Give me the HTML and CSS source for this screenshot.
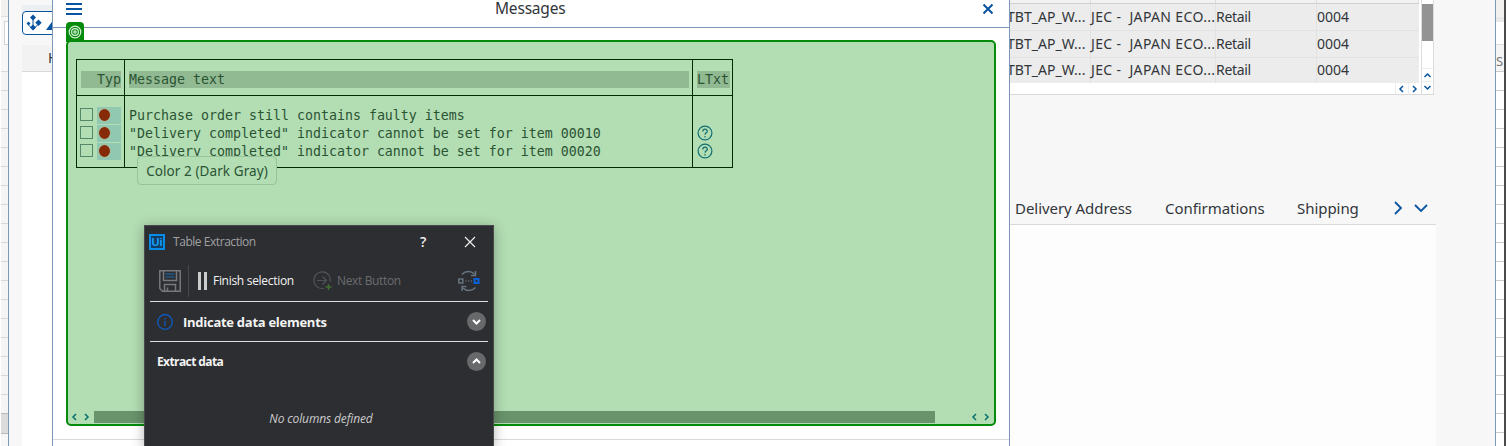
FILE: index.html
```
<!DOCTYPE html>
<html lang="en">
<head>
<meta charset="utf-8">
<title>Messages</title>
<link rel="stylesheet" href="styles.css">
</head>
<body>
<div class="desktop">
  <div class="edge-left"><div class="edge-top"></div><div class="edge-field"><i></i></div><div class="edge-rows"></div><div class="edge-current"></div></div>
  <main class="app">
    <div class="app-left">
      <div class="strip"></div>
      <div class="tool-button">
        <svg width="32" height="22" viewBox="0 0 32 22"><g fill="#0854a0"><path d="M10 2.500l3 3-3 3-3-3zM15.500 7.500l3.200 3.200-3.200 3.200-3.200-3.200zM10 12.500l3 3-3 3-3-3zM5.500 9.500l2 2-2 2-2-2z"/><path d="M31 7v11H23z"/></g><path d="M10 6v10M5.500 13l4.500 4.500 4.500-4.500" fill="none" stroke="#0854a0"/></svg>
      </div>
      <div class="left-head"><span>H</span></div>
      <div class="left-body"></div>
    </div>
    <div class="app-right">
      <div class="items">
        <div class="items-grid">
          <div class="items-head"><i></i><i></i><i></i><i></i></div>
          <div class="items-row"><span class="vendor">TBT_AP_W...</span><span class="plant">JEC - &nbsp;JAPAN ECO...</span><span class="retail">Retail</span><span class="code">0004</span></div>
          <div class="items-row"><span class="vendor">TBT_AP_W...</span><span class="plant">JEC - &nbsp;JAPAN ECO...</span><span class="retail">Retail</span><span class="code">0004</span></div>
          <div class="items-row last"><span class="vendor">TBT_AP_W...</span><span class="plant">JEC - &nbsp;JAPAN ECO...</span><span class="retail">Retail</span><span class="code">0004</span></div>
          <div class="items-foot">
            <svg width="26" height="11" viewBox="0 0 26 11"><path d="M.5 0v11M13.500 0v11" stroke="#eee"/><path d="M8 3L5 6l3 3M18 3l3 3-3 3" fill="none" stroke="#0854a0" stroke-width="1.500"/></svg>
          </div>
        </div>
        <div class="vscroll"><div class="thumb"></div>
          <svg width="11" height="26" viewBox="0 0 11 26"><path d="M0 .5h11M0 13.500h11" stroke="#eee"/><path d="M2.500 9l3-3 3 3M2.500 18l3 3 3-3" fill="none" stroke="#0854a0" stroke-width="1.500"/></svg>
        </div>
      </div>
      <nav class="tabs">
        <span class="tab t1">Delivery Address</span><span class="tab t2">Confirmations</span><span class="tab t3">Shipping</span>
        <svg width="36" height="16" viewBox="0 0 36 16"><path d="M2 2l6 6-6 6M22 5l6 6 6-6" fill="none" stroke="#0854a0" stroke-width="1.800"/></svg>
      </nav>
      <div class="tab-body"></div>
    </div>
  </main>
  <div class="edge-right"><div class="er-top"></div><div class="er-gap"></div><div class="er-head">S</div><div class="er-rows"></div></div>

  <section class="dialog">
    <header class="dialog-head">
      <svg width="16" height="16" viewBox="0 0 16 16"><path d="M0 4h16M0 9h16M0 14h16" stroke="#0854a0" stroke-width="2"/></svg>
      <h1>Messages</h1>
      <svg class="close" width="12" height="12" viewBox="0 0 12 12"><path d="M1.500 1.500l9 9M10.500 1.500l-9 9" stroke="#0854a0" stroke-width="2"/></svg>
    </header>
    <div class="target">
      <div class="target-badge"><svg width="14" height="14" viewBox="0 0 14 14" fill="none" stroke="#d8f0d8" stroke-width="1.200"><circle cx="7" cy="7" r="5.800"/><circle cx="7" cy="7" r="3.400"/><circle cx="7" cy="7" r="1.200"/></svg></div>
      <div class="messages">
        <div class="mh c1"><span class="hl right">Typ</span></div>
        <div class="mh c2"><span class="hl">Message text</span></div>
        <div class="mh c3"><span class="hl">LTxt</span></div>
        <div class="mb c1">
          <div class="kind"><i class="check"></i><b><u></u></b></div>
          <div class="kind"><i class="check"></i><b><u></u></b></div>
          <div class="kind"><i class="check"></i><b><u></u></b></div>
        </div>
        <div class="mb c2">
          <p>Purchase order still contains faulty items</p>
          <p>"Delivery completed" indicator cannot be set for item 00010</p>
          <p>"Delivery completed" indicator cannot be set for item 00020</p>
        </div>
        <div class="mb c3 help">
          <svg width="16" height="18" viewBox="0 0 16 18" fill="none" stroke="#116f72" stroke-width="1.200"><circle cx="8" cy="9" r="6.900"/><path d="M5.800 7.500c0-3 4.500-3 4.500-.3C10.300 9 8 8.700 8 10.700M8 12v1.500"/></svg>
          <svg width="16" height="18" viewBox="0 0 16 18" fill="none" stroke="#116f72" stroke-width="1.200"><circle cx="8" cy="9" r="6.900"/><path d="M5.800 7.500c0-3 4.500-3 4.500-.3C10.300 9 8 8.700 8 10.700M8 12v1.500"/></svg>
        </div>
      </div>
      <div class="hscroll">
        <svg width="26" height="12" viewBox="0 0 26 12"><path d="M8 3L5 6l3 3M17 3l3 3-3 3" fill="none" stroke="#08706f" stroke-width="1.500"/></svg>
        <div class="track"></div>
        <svg width="26" height="12" viewBox="0 0 26 12"><path d="M8 3L5 6l3 3M17 3l3 3-3 3" fill="none" stroke="#08706f" stroke-width="1.500"/></svg>
      </div>
      <div class="tip"><span>Color 2 (Dark Gray)</span></div>
    </div>
    <div class="dialog-foot"></div>
  </section>

  <section class="extract">
    <header class="x-title">
      <div class="ui-logo">Ui</div><span class="x-name">Table Extraction</span><span class="x-help">?</span>
      <svg width="12" height="12" viewBox="0 0 12 12"><path d="M1 1l10 10M11 1L1 11" stroke="#eee" stroke-width="1.200"/></svg>
    </header>
    <div class="x-tools">
      <svg class="save" width="22" height="22" viewBox="0 0 22 22" fill="none" stroke="#77797b" stroke-width="1.500"><path d="M.8.8h20.400v20.400H3.500L.8 18.500zM4.500 1v9.500h13V1M5.500 21v-6.500h11V21M8.500 17.500V21"/><path d="M6.500 4h9M6.500 7h9" stroke="#244f73" stroke-width="2"/></svg>
      <i class="divider"></i><i class="pause"></i>
      <span class="finish">Finish selection</span>
      <svg class="next-icon" width="20" height="20" viewBox="0 0 20 20" fill="none" stroke="#505356" stroke-width="1.200"><path d="M11 17.300A8.300 8.300 0 1 1 17.300 11M4 9.500h9M9.500 5.500l4 4-4 4"/><path d="M15.500 13v6M12.500 16h6" stroke="#426b37" stroke-width="1.500"/></svg>
      <span class="next">Next Button</span>
      <svg class="cycle" width="24" height="22" viewBox="0 0 24 22" fill="none" stroke="#66737e" stroke-width="1.500"><path d="M5 4.500c3-4 9-4 12.500-.5M18.500 1v4.500H14M18.500 17.500c-3.500 4-9 4-12.500.5M5 21v-4.500h4.500M1.800 9h4v4h-4z"/><path d="M8.500 11h6.500" stroke-dasharray="1 1.700"/><path d="M17.500 9h4v4h-4z" stroke="#0860d8" stroke-width="2"/></svg>
    </div>
    <div class="x-section indicate">
      <svg width="16" height="16" viewBox="0 0 16 16" fill="none" stroke="#0860d0" stroke-width="1.200"><circle cx="8" cy="8" r="7.300"/><path d="M8 6.800V12M8 4v1.500"/></svg>
      <strong>Indicate data elements</strong>
      <svg class="round" width="19" height="19" viewBox="0 0 19 19"><circle cx="9.500" cy="9.500" r="9.500" fill="#68696a"/><path d="M6 8l3.500 3.500L13 8" fill="none" stroke="#fff" stroke-width="2"/></svg>
    </div>
    <div class="x-section data">
      <strong>Extract data</strong>
      <svg class="round" width="19" height="19" viewBox="0 0 19 19"><circle cx="9.500" cy="9.500" r="9.500" fill="#68696a"/><path d="M6 11l3.500-3.500L13 11" fill="none" stroke="#fff" stroke-width="2"/></svg>
    </div>
    <p class="empty"><span>No columns defined</span></p>
  </section>
</div>
</body>
</html>
```
FILE: styles.css
```
* { box-sizing: border-box; }
body { margin: 0; overflow: hidden; font-family: "Noto Sans", sans-serif; color: #32363a; }
svg { display: block; flex: none; }
p, h1 { margin: 0; }
span { white-space: nowrap; }
.desktop { position: relative; display: flex; width: 1506px; height: 446px; overflow: hidden; background: #f7f7f7; }

.edge-left { width: 8px; border-left: 1px solid #fff; background: #f7f7f7; }
.edge-top { height: 17px; background: #f2f1f0; border-bottom: 1px solid #ddd; }
.edge-field { height: 54px; padding: 4px 0 0 3px; }
.edge-field i { display: block; height: 24px; border: 1px solid #d4d4d4; border-right: 0; background: #fff; }
.edge-rows { height: 342px; background: repeating-linear-gradient(#d9d9d9 0 1px, #f5f5f5 1px 19px); }
.edge-current { height: 21px; background: #dcdcdc; border: solid #bbb; border-width: 1px 0; }
.edge-right { width: 11px; border-left: 1px solid #7b98b8; border-right: 2px solid #4b4b4b; background: #fff; }
.er-top { height: 22px; background: #f2f1f0; border-bottom: 5px solid #e9e9e9; }
.er-gap { height: 23px; border-bottom: 1px solid #ddd; }
.er-head { height: 26px; background: #f5f5f5; font: 13px/33px "Noto Sans", sans-serif; color: #777; }
.er-rows { height: 375px; background: repeating-linear-gradient(#ccc 0 1px, #fff 1px 19px); }

.app { display: flex; width: 1487px; border-left: 1px solid #7b98b8; background: #f7f7f7; }
.app-left { width: 44px; padding-left: 13px; }
.strip { height: 11px; border-top: 5px solid #f7f7f7; background: #eceff2; }
.tool-button { width: 60px; height: 24px; border: 1px solid #0854a0; border-radius: 4px; background: #fff; }
.left-head { height: 27px; margin-top: 10px; padding-left: 26px; background: #f2f2f2; border-bottom: 1px solid #d9d9d9; font-size: 14px; line-height: 26px; }
.left-body { height: 374px; background: #fff; }

.app-right { width: 427px; margin-left: 956px; }
.items { display: flex; height: 95px; width: 425px; border-bottom: 1px solid #d9d9d9; background: #fff; }
.items-grid { width: 412px; }
.items-head, .items-row { display: grid; grid-template-columns: 82px 125px 101px 102px; width: 410px; background: #ececec; border-bottom: 1px solid #e2e2e2; }
.items-head { height: 4px; background: #f2f2f2; border-color: #d0d0d0; }
.items-head i { border-right: 1px solid #ddd; }
.items-row { height: 27px; font-size: 14px; line-height: 25px; }
.items-row.last { height: 25px; line-height: 24px; border: 0; }
.items-row span { border-right: 1px solid #e2e2e2; }
.vendor { letter-spacing: .03px; text-indent: -2px; }
.plant { letter-spacing: .36px; }
.retail { letter-spacing: -.3px; }
.items-row .code { border: 0; }
.items-foot { height: 11px; display: flex; justify-content: flex-end; }
.vscroll { display: flex; flex-direction: column; width: 13px; border: solid #ddd; border-width: 0 1px; padding-top: 4px; }
.thumb { height: 37px; margin-bottom: 27px; background: #939393; }
.tabs { display: flex; height: 35px; margin-top: 95px; border-bottom: 1px solid #d9d9d9; padding-left: 6px; font-size: 15px; line-height: 36px; letter-spacing: -.05px; }
.t1 { width: 150px; }
.t2 { width: 132px; }
.t3 { width: 96px; }
.tabs svg { margin-top: 10px; }
.tab-body { height: 221px; background: #fdfdfd; }

.dialog { position: absolute; left: 52px; top: 0; width: 958px; height: 446px; border: solid #7b98b8; border-width: 0 1px; background: #fff; }
.dialog-head { display: flex; height: 28px; padding: 0 15px 0 13px; border-bottom: 1px solid #7b98b8; }
.dialog-head h1 { width: 70px; margin-left: 413px; font-size: 15.500px; font-weight: 400; line-height: 17px; letter-spacing: -.2px; white-space: nowrap; }
.close { margin: 3px 0 0 auto; }
.target { position: relative; height: 386px; width: 930px; margin: 12px 0 0 13px; padding: 17px 7px 0 8px; border: 2px solid #058a0c; border-radius: 5px; background: #b3ddb3; }
.target-badge { position: absolute; left: -2px; top: -20px; width: 18px; height: 20px; padding: 3px 2px; border-radius: 4px 4px 0 0; background: #058a0c; }
.messages { display: grid; width: 657px; height: 109px; grid-template-columns: 48px 568px 41px; grid-template-rows: 37px 72px; font: 13.290px/18px "DejaVu Sans Mono", monospace; color: #2b5434; }
.mh, .mb { border-left: 1px solid #002b00; border-bottom: 1px solid #002b00; }
.mh { border-top: 1px solid #002b00; padding: 11px 3px 0 4px; }
.c3 { border-right: 1px solid #002b00; }
.mh.c3 { padding-right: 2px; }
.hl { display: block; height: 17px; background: #92ba92; }
.right { text-align: right; }
.mb { padding-top: 10px; }
.mb.c2 { padding: 11px 0 0 4px; }
.mb p { white-space: pre; height: 18px; }
.kind { display: flex; height: 18px; padding-left: 3px; }
.check { width: 13px; height: 13px; margin-top: 2px; border: 1px solid #55886a; }
.kind b { width: 24px; height: 17px; margin: 1px 0 0 4px; padding: 1px 1px; background: #91c8b2; }
.kind u { display: block; width: 13px; height: 14px; border-radius: 50%; background: #862b08; border: 1px solid #a8c5a5; }
.help { padding: 28px 0 0 4px; }
.hscroll { display: flex; align-items: center; width: 926px; height: 12px; margin: 243px 0 0 -8px; }
.hscroll svg:last-child { margin-left: 33px; }
.track { width: 841px; height: 12px; background: #69936b; }
.tip { position: absolute; left: 69px; top: 114px; width: 140px; height: 29px; border: 1px solid #98c29a; border-radius: 4px; background: #b3ddb3; text-align: center; font-size: 13.500px; line-height: 28px; letter-spacing: .08px; color: #2b5434; }
.dialog-foot { margin-top: 13px; height: 7px; border-top: 1px solid #d9d9d9; }

.extract { position: absolute; left: 144px; top: 225px; width: 350px; height: 222px; border: 1px solid #48494b; background: #2d2e32; color: #f3f3f3; font-family: "Open Sans", sans-serif; box-shadow: 0 2px 12px rgba(0,0,0,.3); font-size: 12px; }
.x-title { display: flex; height: 31px; align-items: center; padding-left: 4px; }
.ui-logo { width: 16px; height: 16px; border: 2px solid #078ce9; background: #123c61; color: #18a0ff; font: bold 11px/12px "Liberation Sans", sans-serif; text-align: center; }
.x-name { width: 247px; margin-left: 8px; color: #a0a0a2; letter-spacing: -.45px; }
.x-help { width: 44px; font-size: 14px; font-weight: 600; }
.x-tools { display: flex; height: 45px; align-items: center; margin: 0 5px; padding: 3px 7px 0 9px; border-bottom: 1px solid #ddd; }
.divider { width: 1px; height: 32px; margin-left: 7px; background: #48494b; }
.pause { width: 9px; height: 18px; margin-left: 9px; border: solid #ccc; border-width: 0 3px; }
.finish { margin-left: 6px; width: 100px; letter-spacing: -.3px; }
.next { margin-left: 4px; color: #6b6c6e; letter-spacing: -.35px; }
.cycle { margin-left: auto; }
.x-section { display: flex; height: 40px; align-items: center; margin: 0 5px; padding: 0 2px 0 7px; }
.indicate { border-bottom: 1px solid #ddd; }
.indicate strong { margin-left: 10px; font-size: 13px; letter-spacing: -.27px; }
.round { margin-left: auto; }
.data { height: 38px; }
.data strong { font-size: 12px; font-weight: 700; letter-spacing: -.6px; }
.empty { margin-top: 29px; padding-left: 4px; text-align: center; font-style: italic; letter-spacing: -.13px; color: #ccc; line-height: 20px; }
```
